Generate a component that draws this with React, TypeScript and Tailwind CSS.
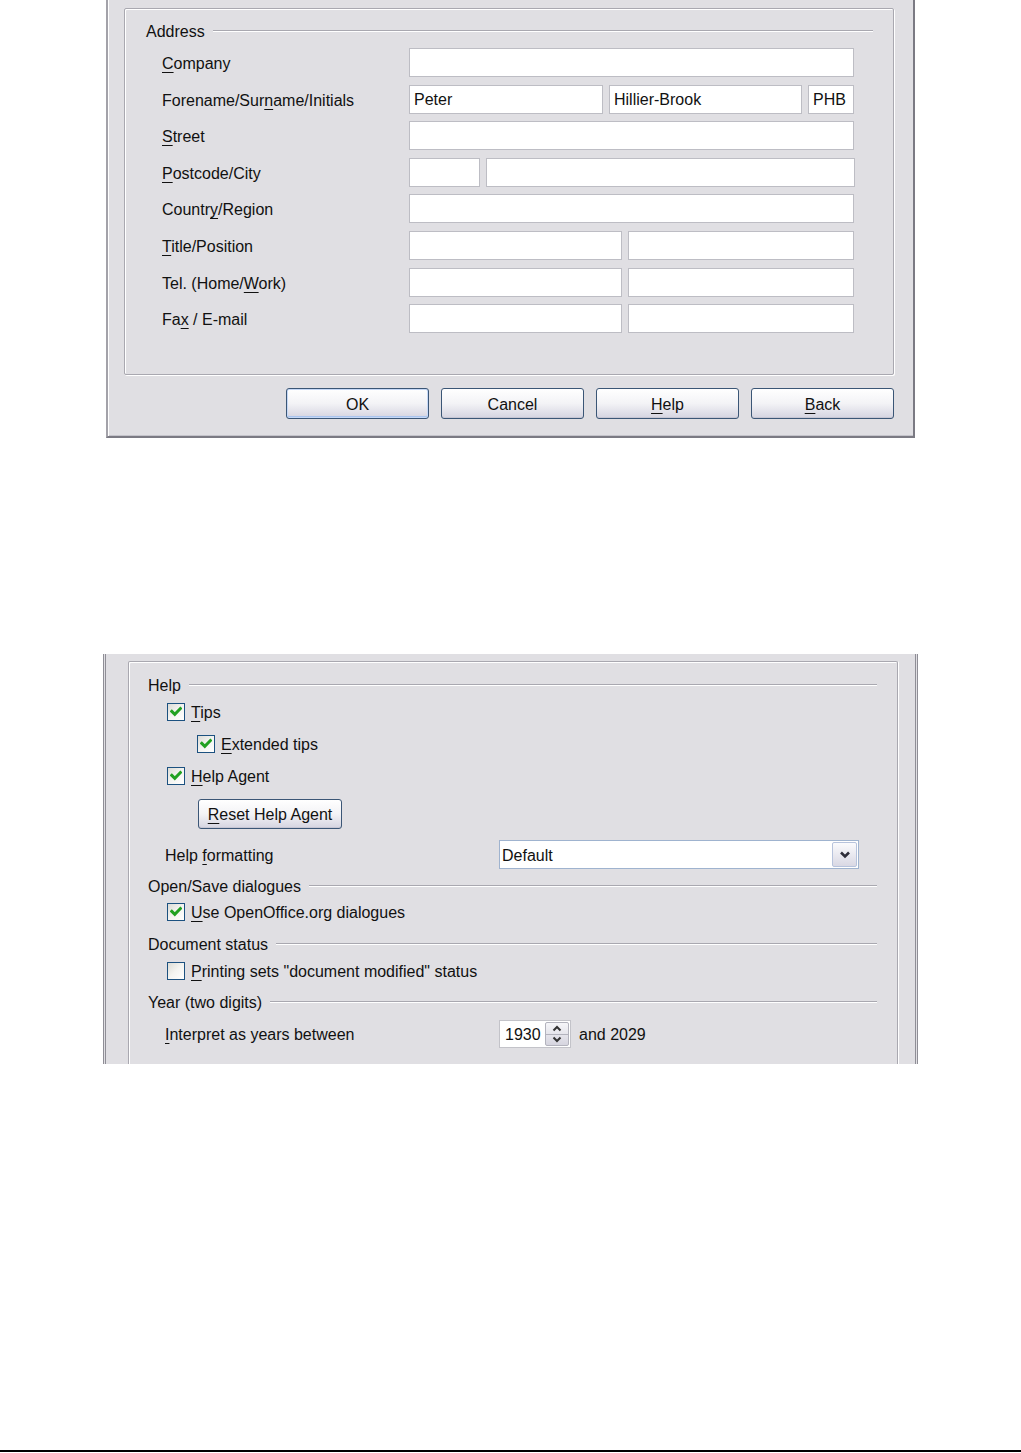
import React from "react";

const U = ({ children }: { children: React.ReactNode }) => (
  <span className="underline decoration-1 underline-offset-[3px]">{children}</span>
);

const Field = ({ w, value }: { w: string; value?: string }) => (
  <div className={`${w} h-[29px] bg-white border border-[#bdbdc4] flex items-center pl-[4px] pt-[2px] shrink-0`}>
    {value}
  </div>
);

const Row = ({ label, children }: { label: React.ReactNode; children: React.ReactNode }) => (
  <div className="flex items-center h-[29px]">
    <div className="w-[247px] shrink-0 pt-[3px]">{label}</div>
    <div className="flex gap-[6px]">{children}</div>
  </div>
);

const XPButton = ({ children, w, h, def }: { children: React.ReactNode; w: string; h: string; def?: boolean }) => (
  <div
    className={`${w} ${h} shrink-0 rounded-[3px] border border-[#3b5676] bg-linear-to-b from-white via-[#f3f3f6] to-[#d5d4e0] flex items-center justify-center pt-[2px] ${
      def ? "shadow-[inset_0_0_0_1px_#c5d8f7,inset_0_-1px_0_1px_#a9c4ee]" : "shadow-[inset_0_-1px_0_#c7c6d3]"
    }`}
  >
    {children}
  </div>
);

const Heading = ({ children }: { children: React.ReactNode }) => (
  <div className="flex items-center h-[20px]">
    <span className="pt-[2px]">{children}</span>
    <div className="flex-1 ml-[8px] h-[2px] border-t border-[#a9a8b0] border-b border-b-white" />
  </div>
);

const Check = ({ checked }: { checked?: boolean }) => (
  <span className="w-[18px] h-[18px] border border-[#1c5180] bg-linear-to-br from-[#dcdcd6] via-[#f4f4f1] to-white flex items-center justify-center shrink-0">
    {checked && (
      <svg width="12" height="12" viewBox="0 0 12 12">
        <path d="M1.8 5.4 L4.8 8.4 L10.4 2.6" stroke="#21a121" strokeWidth="3" fill="none" strokeLinecap="square" />
      </svg>
    )}
  </span>
);

const CheckRow = ({ checked, children, ml }: { checked?: boolean; children: React.ReactNode; ml: string }) => (
  <div className={`flex items-center h-[20px] ${ml}`}>
    <Check checked={checked} />
    <span className="ml-[6px] pt-[2px]">{children}</span>
  </div>
);

export default function App() {
  return (
    <div className="w-[1021px] h-[1453px] bg-white flex flex-col font-['Liberation_Sans',Arial,sans-serif] text-[16px] text-[#111]">
      {/* Dialog 1 */}
      <div className="ml-[106px] w-[809px] h-[438px] shrink-0 bg-[#e0dfe3] border-l-2 border-l-[#a3a2a9] border-r-2 border-r-[#7b7a83] border-b-2 border-b-[#7b7a83] pt-[8px] pl-[16px] pr-[19px] shadow-[inset_1px_0_0_#fff,inset_0_-1px_0_#c4c3ca]">
        <div className="h-[367px] border border-[#a9a8b0] rounded-[2px] shadow-[inset_1px_1px_0_#fff,1px_1px_0_#fff] pt-[12px]">
          <div className="pl-[21px] pr-[20px]">
            <Heading>Address</Heading>
          </div>
          <div className="pl-[37px] mt-[7px] flex flex-col gap-[7.6px]">
            <Row label={<><U>C</U>ompany</>}>
              <Field w="w-[445px]" />
            </Row>
            <Row label={<>Forename/Sur<U>n</U>ame/Initials</>}>
              <Field w="w-[194px]" value="Peter" />
              <Field w="w-[193px]" value="Hillier-Brook" />
              <Field w="w-[46px]" value="PHB" />
            </Row>
            <Row label={<><U>S</U>treet</>}>
              <Field w="w-[445px]" />
            </Row>
            <Row label={<><U>P</U>ostcode/City</>}>
              <Field w="w-[71px]" />
              <Field w="w-[369px]" />
            </Row>
            <Row label={<>Countr<U>y</U>/Region</>}>
              <Field w="w-[445px]" />
            </Row>
            <Row label={<><U>T</U>itle/Position</>}>
              <Field w="w-[213px]" />
              <Field w="w-[226px]" />
            </Row>
            <Row label={<>Tel. (Home/<U>W</U>ork)</>}>
              <Field w="w-[213px]" />
              <Field w="w-[226px]" />
            </Row>
            <Row label={<>Fa<U>x</U> / E-mail</>}>
              <Field w="w-[213px]" />
              <Field w="w-[226px]" />
            </Row>
          </div>
        </div>
        <div className="mt-[13px] flex justify-end gap-[12px]">
          <XPButton w="w-[143px]" h="h-[31px]" def>OK</XPButton>
          <XPButton w="w-[143px]" h="h-[31px]">Cancel</XPButton>
          <XPButton w="w-[143px]" h="h-[31px]"><U>H</U>elp</XPButton>
          <XPButton w="w-[143px]" h="h-[31px]"><U>B</U>ack</XPButton>
        </div>
      </div>

      {/* Dialog 2 */}
      <div className="mt-[216px] ml-[103px] w-[815px] h-[410px] shrink-0 bg-[#e0dfe3] border-l-[3px] border-r-[3px] border-double border-[#8f8e96] pt-[7px] pl-[22px] pr-[17px] flex flex-col">
        <div className="flex-1 border-t border-l border-r border-[#a9a8b0] rounded-t-[2px] shadow-[inset_1px_1px_0_#fff,1px_0_0_#fff] pt-[13px] pl-[19px] pr-[20px]">
          <Heading>Help</Heading>
          <div className="mt-[7px]">
            <CheckRow checked ml="ml-[19px]"><U>T</U>ips</CheckRow>
          </div>
          <div className="mt-[12px]">
            <CheckRow checked ml="ml-[49px]"><U>E</U>xtended tips</CheckRow>
          </div>
          <div className="mt-[12px]">
            <CheckRow checked ml="ml-[19px]"><U>H</U>elp Agent</CheckRow>
          </div>
          <div className="mt-[13px] ml-[50px]">
            <XPButton w="w-[144px]" h="h-[30px]"><U>R</U>eset Help Agent</XPButton>
          </div>
          <div className="mt-[11px] ml-[17px] flex items-center h-[29px]">
            <div className="w-[334px] shrink-0 pt-[2px]">Help <U>f</U>ormatting</div>
            <div className="w-[360px] h-[29px] bg-white border border-[#9fb3cf] flex items-center pl-[2px] pr-[1px]">
              <span className="flex-1 pt-[2px]">Default</span>
              <div className="w-[25px] h-[25px] rounded-[2px] border border-[#b7c3dc] bg-linear-to-b from-[#fbfbfd] to-[#d9d8e4] flex items-center justify-center">
                <svg width="12" height="10" viewBox="0 0 12 10">
                  <path d="M2 2.5 L6 6.5 L10 2.5" stroke="#2e2e3a" strokeWidth="2.6" fill="none" />
                </svg>
              </div>
            </div>
          </div>
          <div className="mt-[7px]">
            <Heading>Open/Save dialogues</Heading>
          </div>
          <div className="mt-[6px]">
            <CheckRow checked ml="ml-[19px]"><U>U</U>se OpenOffice.org dialogues</CheckRow>
          </div>
          <div className="mt-[12px]">
            <Heading>Document status</Heading>
          </div>
          <div className="mt-[7px]">
            <CheckRow ml="ml-[19px]"><U>P</U>rinting sets "document modified" status</CheckRow>
          </div>
          <div className="mt-[11px]">
            <Heading>Year (two digits)</Heading>
          </div>
          <div className="mt-[8px] ml-[17px] flex items-center h-[28px]">
            <div className="w-[334px] shrink-0 pt-[2px]"><U>I</U>nterpret as years between</div>
            <div className="w-[72px] h-[28px] bg-white border border-[#c3c3c9] flex items-center pl-[5px] pr-[1px]">
              <span className="flex-1 pt-[2px]">1930</span>
              <div className="w-[24px] h-[24px] flex flex-col rounded-[2px] border border-[#b3b3bd] bg-linear-to-b from-[#f6f6f9] to-[#d6d5df] overflow-hidden">
                <div className="flex-1 flex items-center justify-center border-b border-[#b3b3bd]">
                  <svg width="10" height="7" viewBox="0 0 10 7">
                    <path d="M1.5 5.5 L5 2 L8.5 5.5" stroke="#333" strokeWidth="2" fill="none" />
                  </svg>
                </div>
                <div className="flex-1 flex items-center justify-center">
                  <svg width="10" height="7" viewBox="0 0 10 7">
                    <path d="M1.5 1.5 L5 5 L8.5 1.5" stroke="#333" strokeWidth="2" fill="none" />
                  </svg>
                </div>
              </div>
            </div>
            <span className="ml-[8px] pt-[2px]">and 2029</span>
          </div>
        </div>
      </div>

      <div className="flex-1" />
      <div className="h-[2px] bg-black shrink-0" />
      <div className="h-[1px] shrink-0" />
    </div>
  );
}
